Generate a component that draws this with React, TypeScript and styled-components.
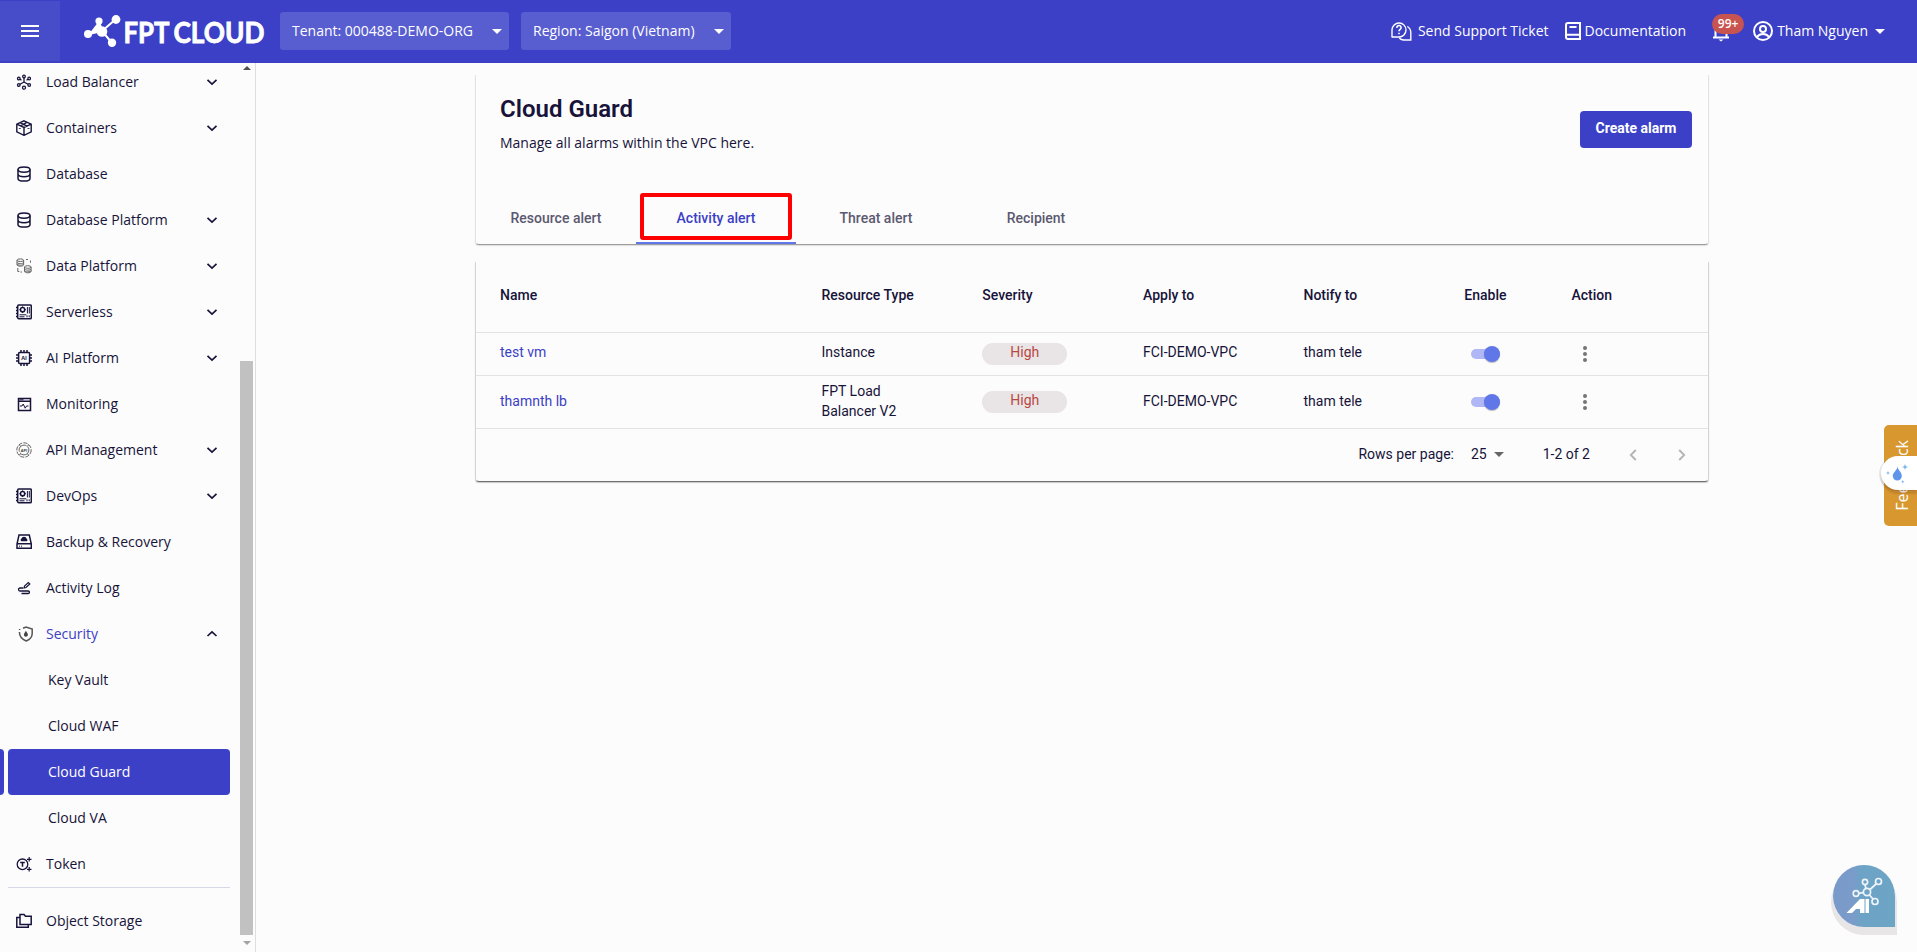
import { useState } from "react";
import type { ReactNode } from "react";
import styled, { createGlobalStyle } from "styled-components";

const GlobalStyle = createGlobalStyle`
    :root {
        --accent: #3b40c6;
        --accent-light: #5f77e9;
        --ink: #17133a;
        --muted: #5b5870;
        --bg: #fcfcfc;
        --line: #e3e3e3;
    }

    * {
        box-sizing: border-box;
    }

    body {
        margin: 0;
        background-color: var(--bg);
        color: var(--ink);
        font-family: "Open Sans", "Noto Sans", sans-serif;
        font-size: 14px;
        overflow: hidden;
    }

    button {
        font: inherit;
        color: inherit;
        border: none;
        background: none;
        padding: 0;
        cursor: pointer;
    }

    svg {
        display: block;
        flex-shrink: 0;
    }
`;

const Page = styled.div`
    height: 952px;
    display: flex;
    flex-direction: column;
`;

const Header = styled.header`
    height: 63px;
    flex-shrink: 0;
    display: flex;
    align-items: flex-start;
    background-color: var(--accent);
    color: white;
`;

const MenuButton = styled.button`
    width: 60px;
    height: 60px;
    margin-top: 1px;
    background-color: #474cc9;
    display: flex;
    align-items: center;
    justify-content: center;
`;

const Logo = styled.div`
    width: 184px;
    margin: 13px 12px 0 24px;

    svg {
        overflow: visible;
    }
`;

const Picker = styled.button<{ $width: number }>`
    width: ${(p) => p.$width}px;
    height: 38px;
    margin: 12px 12px 0 0;
    padding: 0 7px 0 12px;
    border-radius: 3px;
    background-color: #585dd0;
    color: white;
    font-weight: 500;
    display: flex;
    align-items: center;
    justify-content: space-between;
    white-space: nowrap;
`;

const PickerLabel = styled.span`
    padding-bottom: 2px;
`;

const HeaderLinks = styled.div`
    height: 62px;
    margin-left: auto;
    padding-right: 32px;
    display: flex;
    align-items: center;
    font-weight: 500;
    white-space: nowrap;
`;

const HeaderLink = styled.div<{ $gap: number; $after: number }>`
    display: flex;
    align-items: center;
    gap: ${(p) => p.$gap}px;
    margin-right: ${(p) => p.$after}px;

    span {
        padding-bottom: 2px;
    }
`;

const Bell = styled.div`
    position: relative;
    width: 18px;
    height: 22px;
    margin-right: 23px;
`;

const Badge = styled.span`
    position: absolute;
    left: 0;
    top: -6px;
    width: 32px;
    height: 20px;
    border-radius: 10px;
    background-color: #c75450;
    font-size: 12px;
    font-weight: 600;
    line-height: 19px;
    text-align: center;
`;

const Body = styled.div`
    flex: 1;
    min-height: 0;
    display: flex;
`;

const Sidebar = styled.aside`
    width: 256px;
    flex-shrink: 0;
    border-right: 1px solid #dedede;
    display: flex;
    overflow: hidden;
`;

const Nav = styled.nav`
    width: 240px;
    margin-top: -4px;
`;

const NavRow = styled.div`
    display: flex;
    gap: 4px;
    height: 46px;
`;

const Marker = styled.span<{ $active?: boolean }>`
    width: 4px;
    border-radius: 0 4px 4px 0;
    background-color: ${(p) => (p.$active ? "var(--accent)" : "transparent")};
`;

const NavItem = styled.a<{ $active?: boolean; $open?: boolean; $sub?: boolean }>`
    width: 222px;
    padding: 0 12px 0 ${(p) => (p.$sub ? 40 : 8)}px;
    border-radius: 4px;
    display: flex;
    align-items: center;
    background-color: ${(p) => (p.$active ? "var(--accent)" : "transparent")};
    color: ${(p) => (p.$active ? "white" : p.$open ? "var(--accent)" : "var(--ink)")};
    font-weight: ${(p) => (p.$active ? 500 : 400)};
`;

const NavIcon = styled.span`
    width: 30px;
    color: var(--ink);
`;

const NavLabel = styled.span`
    flex: 1;
    padding-bottom: 2px;
    white-space: nowrap;
`;

const NavDivider = styled.hr`
    width: 222px;
    height: 1px;
    margin: 0 0 10px 8px;
    border: none;
    background-color: #d7d9e6;
`;

const Scrollbar = styled.div`
    width: 13px;
    display: flex;
    flex-direction: column;
    align-items: center;
    padding: 3px 0 7px;
`;

const Thumb = styled.div`
    width: 13px;
    height: 574px;
    margin: auto 0 6px;
    background-color: #c1c1c1;
`;

const Main = styled.main`
    flex: 1;
    padding: 12px 208px 0 219px;
`;

const HeadCard = styled.section`
    height: 170px;
    border: 1px solid var(--line);
    border-top: none;
    border-bottom: 1px solid #9d9da0;
    border-radius: 0 0 4px 4px;
    box-shadow: 0 1px 1px rgba(0, 0, 0, 0.12);
    display: flex;
    flex-direction: column;
    justify-content: space-between;
`;

const TitleRow = styled.div`
    display: flex;
    justify-content: space-between;
    align-items: flex-start;
    padding: 19px 16px 0 24px;
`;

const Title = styled.h1`
    margin: 0;
    font: 600 24px/30px Roboto, sans-serif;
`;

const Subtitle = styled.p`
    margin: 9px 0 0;
    line-height: 20px;
`;

const CreateButton = styled.button`
    width: 112px;
    height: 37px;
    margin-top: 17px;
    padding-bottom: 3px;
    border-radius: 4px;
    background-color: var(--accent);
    color: white;
    font: 700 14px Roboto, sans-serif;
`;

const Tabs = styled.div`
    display: flex;
    height: 51px;
`;

const Tab = styled.button<{ $active: boolean }>`
    position: relative;
    width: 160px;
    border-bottom: 2px solid ${(p) => (p.$active ? "var(--accent-light)" : "transparent")};
    color: ${(p) => (p.$active ? "var(--accent)" : "var(--muted)")};
    font: 500 14px Roboto, sans-serif;
`;

const Highlight = styled.span`
    position: absolute;
    left: 4px;
    top: 0;
    width: 152px;
    height: 47px;
    border: 4px solid #ff0000;
    border-radius: 3px;
`;

const TableCard = styled.section`
    height: 220px;
    margin-top: 17px;
    border: 1px solid #d4d4d6;
    border-top: none;
    border-bottom: 1px solid #707072;
    border-radius: 0 0 4px 4px;
    box-shadow: 0 1px 1px rgba(0, 0, 0, 0.2);
    font-family: Roboto, sans-serif;
`;

const Row = styled.div<{ $height: number; $head?: boolean }>`
    height: ${(p) => p.$height}px;
    padding-left: 24px;
    border-bottom: 1px solid var(--line);
    display: grid;
    grid-template-columns: 321.5px 160.8px 160.7px 160.5px 160.8px 107.2px 1fr;
    align-items: center;
    line-height: 20px;
    font-weight: ${(p) => (p.$head ? 500 : 400)};
`;

const HeadCell = styled.div`
    padding-bottom: 4px;
`;

const Cell = styled.div<{ $lift: number; $narrow?: boolean }>`
    padding: 0 ${(p) => (p.$narrow ? 60 : 0)}px ${(p) => p.$lift}px 0;
`;

const NameLink = styled.a`
    color: var(--accent);
`;

const Severity = styled.span`
    width: 85px;
    height: 22px;
    border-radius: 11px;
    background-color: #e9e4e6;
    color: #b8483f;
    line-height: 19px;
    text-align: center;
`;

const Toggle = styled.button<{ $on: boolean }>`
    width: 29px;
    height: 10px;
    margin-left: 6.5px;
    border-radius: 5px;
    background-color: ${(p) => (p.$on ? "#afb7f4" : "#bbb")};
    display: flex;
    align-items: center;
    justify-content: ${(p) => (p.$on ? "flex-end" : "flex-start")};

    &::after {
        content: "";
        width: 16px;
        height: 16px;
        border-radius: 50%;
        background-color: ${(p) => (p.$on ? "var(--accent-light)" : "#fafafa")};
        box-shadow: 0 1px 1px rgba(0, 0, 0, 0.25);
    }
`;

const Dots = styled.button`
    width: 4px;
    margin-left: 12px;
    display: flex;
    flex-direction: column;
    gap: 2px;

    i {
        width: 4px;
        height: 4px;
        border-radius: 50%;
        background-color: #757575;
    }
`;

const Pager = styled.div`
    height: 52px;
    padding: 0 22px 1px 0;
    display: flex;
    align-items: center;
    justify-content: flex-end;
`;

const PagerText = styled.span<{ $after: number }>`
    margin-right: ${(p) => p.$after}px;
    padding-bottom: 1px;
`;

const PagerSelect = styled.div`
    margin-right: 39px;
    display: flex;
    align-items: center;
`;

const PagerArrows = styled.div`
    display: flex;
    gap: 41px;
`;

const Triangle = styled.i<{ $size: number; $color: string; $up?: boolean }>`
    border: ${(p) => p.$size}px solid transparent;
    border-top: ${(p) => (p.$up ? 0 : p.$size)}px solid ${(p) => p.$color};
    border-bottom: ${(p) => (p.$up ? p.$size : 0)}px solid ${(p) => p.$color};
`;

const FeedbackTab = styled.div`
    position: fixed;
    right: 0;
    top: 425px;
    width: 33px;
    height: 101px;
    padding-left: 2px;
    border-radius: 5px 0 0 5px;
    background-color: #d9982f;
    color: white;
    font-size: 16px;
    font-weight: 500;
    display: flex;
    align-items: center;
    justify-content: center;

    span {
        writing-mode: vertical-rl;
        transform: rotate(180deg);
    }
`;

const DropBubble = styled.div`
    position: fixed;
    right: 0;
    top: 456px;
    width: 36px;
    height: 34px;
    padding: 8px 0 0 1px;
    border-radius: 17px 0 0 17px;
    background-color: white;
    box-shadow: -2px 1px 0 rgba(60, 30, 40, 0.1), 0 4px 2px rgba(60, 30, 20, 0.15);
`;

const AiButton = styled.button`
    position: fixed;
    left: 1833px;
    top: 865px;
    width: 62px;
    height: 62px;
    border-radius: 31px 31px 0 31px;
    background: linear-gradient(90deg, #7a9aca 0, #7a9cca 33%, #6da3c6 45%, #6da5c5 100%);
    box-shadow: 0 6px 0 2px rgba(60, 30, 40, 0.1);
`;

const line = { fill: "none", stroke: "currentColor", strokeWidth: 1.5 };

const Icon = ({ children }: { children: ReactNode }) => (
    <svg width="16" height="16" viewBox="0 0 16 16" {...line}>{children}</svg>
);

const DatabaseIcon = (
    <Icon>
        <ellipse cx="8" cy="3.6" rx="6" ry="2.7" />
        <path d="M2 3.6v8.8c0 1.5 2.6 2.7 6 2.7s6-1.2 6-2.7V3.6M2 8c0 1.5 2.6 2.7 6 2.7S14 9.5 14 8" />
    </Icon>
);

const BoardIcon = (
    <Icon>
        <rect x="1.7" y="1" width="13.6" height="13.8" rx="1" />
        <circle cx="6.6" cy="5.7" r="2.1" />
        <path d="M6.6 2.4v1.2M6.6 7.8V9M3.3 5.7h1.2M8.7 5.7h1.2M11.4 3v6.5M13.3 3v6.5M3.5 10.8h6.8M3.5 12.8h5M11 11.3v2M13.2 11.3v2" strokeWidth="1" />
        <path d="M0 3.5h2M0 6.5h2M0 9.5h2M0 12.5h2" />
    </Icon>
);

const icons: Record<string, ReactNode> = {
    balancer: (
        <Icon>
            <g strokeWidth="1.3">
                <circle cx="8" cy="2.5" r="1.3" /><circle cx="8" cy="13.7" r="1.5" />
                <circle cx="2.8" cy="4.5" r="1.3" /><circle cx="13.2" cy="4.5" r="1.3" />
                <circle cx="2.8" cy="11" r="1.3" /><circle cx="13.2" cy="11" r="1.3" />
                <path d="M8 4v4M8 8l-4 2.3M8 8l4 2.3M4 5.3l1.5 1M12 5.3l-1.5 1" />
            </g>
        </Icon>
    ),
    container: (
        <Icon>
            <path d="M8 .8l7.2 3.3v7.8L8 15.3.8 11.9V4.1zM.8 4.1L8 7.5l7.2-3.4M8 7.5v7.8M4 2.6l7.2 3.5M4.3 5.8l6.5-3.5" strokeWidth="1.4" />
            <path d="M2.8 8.5h2M11.5 8.5h2" strokeWidth=".8" />
        </Icon>
    ),
    database: DatabaseIcon,
    data: (
        <Icon>
            <g stroke="#666" strokeWidth="1">
                <ellipse cx="4.3" cy="2.2" rx="3.3" ry="1.3" />
                <path d="M1 2.2v4.6c0 .8 1.5 1.4 3.3 1.4s3.3-.6 3.3-1.4V2.2M1 4.4c0 1.5 6.6 1.5 6.6 0M1 6c0 1.5 6.6 1.5 6.6 0" />
                <ellipse cx="11.8" cy="9" rx="3.3" ry="1.3" />
                <path d="M8.5 9v4.4c0 .8 1.5 1.4 3.3 1.4s3.3-.6 3.3-1.4V9M8.5 11c0 1.5 6.6 1.5 6.6 0M8.5 12.7c0 1.5 6.6 1.5 6.6 0" />
                <path d="M10 1.5h2M14.5 2.5v2.2M1.8 10v3.5h1.5M4.5 14H6" />
            </g>
        </Icon>
    ),
    board: BoardIcon,
    ai: (
        <Icon>
            <rect x="2.6" y="2.6" width="11" height="11" rx="1" />
            <path d="M5 0v2.5M8 0v2.5M11 0v2.5M5 13.5V16M8 13.5V16M11 13.5V16M0 5h2.5M0 8h2.5M0 11h2.5M13.5 5H16M13.5 8H16M13.5 11H16" />
            <text x="8.1" y="10.1" fontSize="5.5" fontWeight="700" textAnchor="middle" fill="currentColor" stroke="none">AI</text>
        </Icon>
    ),
    monitor: (
        <Icon>
            <path d="M2.5 2.5h12v12h-12zM2 5.2h12.5" />
            <path d="M3.5 3.8h4M4 10h2l1.2-2 2 4.2 1.3-2.2h2" strokeWidth="1" />
        </Icon>
    ),
    api: (
        <Icon>
            <g stroke="#666" strokeWidth="1">
                <circle cx="8" cy="8" r="7.2" strokeDasharray="4.3 1.2" />
                <circle cx="8" cy="8" r="4.9" strokeDasharray="12 1.3" />
                <path d="M3 2.7l2 1.8M13 2.7l-2 1.8M3 13.3l2-1.8M13 13.3l-2-1.8" />
            </g>
            <text x="8" y="9.5" fontSize="4" fontWeight="700" textAnchor="middle" fill="#444" stroke="none">API</text>
        </Icon>
    ),
    backup: (
        <Icon>
            <path d="M3 1h10.3l2 9v4.2H1V10zM1 9.8h14.3" />
            <path d="M5.3 7.2a1.5 1.5 0 010-2.5 2.8 2.8 0 015.4 0 1.4 1.4 0 010 2.5z" fill="currentColor" stroke="none" />
            <path d="M3 12.2h1M5 12.2h1" strokeWidth="1" />
        </Icon>
    ),
    activity: (
        <Icon>
            <path d="M7 8H4a1.3 1.3 0 000 3h8.2a1.2 1.2 0 010 2.5H5.5" strokeWidth="1.3" />
            <path d="M8 8l.5-2 3.8-3.5L13.8 4 10 7.5z" strokeWidth="1.2" />
        </Icon>
    ),
    security: (
        <svg width="18" height="16" viewBox="0 0 18 16" {...line}>
            <path d="M7 2.2L10 1l6.2 2v4.5c0 3.8-2.5 6-6 7.5-4-1.6-6.8-4.5-6.8-9M3.6 4V3" stroke="#555" />
            <path d="M9.9 4.8c1 1.7 2 2.7 2 4a2 2 0 01-4 0c0-1.3 1-2.3 2-4z" fill="#444" stroke="none" />
        </svg>
    ),
    token: (
        <Icon>
            <circle cx="6.5" cy="8.3" r="5.3" strokeWidth="1.3" />
            <path d="M4.2 6.5h4.6M6.5 6.5v4.2" />
            <path d="M13.2 1v4.6M11 3.3h4.5M13.2 11v4.6M11 13.3h4.5" strokeWidth="1.2" />
        </Icon>
    ),
    storage: (
        <Icon>
            <path d="M4 1.5h4l1.5 1.8h5.7v8.2H4zM3.500 4.500H.8v9.700h11.500v-2.500" />
        </Icon>
    ),
};

const navItems = [
    { label: "Load Balancer", icon: "balancer", arrow: true },
    { label: "Containers", icon: "container", arrow: true },
    { label: "Database", icon: "database" },
    { label: "Database Platform", icon: "database", arrow: true },
    { label: "Data Platform", icon: "data", arrow: true },
    { label: "Serverless", icon: "board", arrow: true },
    { label: "AI Platform", icon: "ai", arrow: true },
    { label: "Monitoring", icon: "monitor" },
    { label: "API Management", icon: "api", arrow: true },
    { label: "DevOps", icon: "board", arrow: true },
    { label: "Backup & Recovery", icon: "backup" },
    { label: "Activity Log", icon: "activity" },
    { label: "Security", icon: "security", arrow: true, open: true },
    { label: "Key Vault" },
    { label: "Cloud WAF" },
    { label: "Cloud Guard" },
    { label: "Cloud VA" },
    { label: "Token", icon: "token" },
    { label: "Object Storage", icon: "storage" },
];

const tabs = ["Resource alert", "Activity alert", "Threat alert", "Recipient"];

const columns = ["Name", "Resource Type", "Severity", "Apply to", "Notify to", "Enable", "Action"];

const alarms = [
    { name: "test vm", type: "Instance", severity: "High", vpc: "FCI-DEMO-VPC", notify: "tham tele", height: 43, lift: 4 },
    { name: "thamnth lb", type: "FPT Load Balancer V2", severity: "High", vpc: "FCI-DEMO-VPC", notify: "tham tele", height: 53, lift: 2 },
];

const Chevron = ({ up }: { up?: boolean }) => (
    <svg width="12" height="8" viewBox="0 0 12 8" {...line} strokeWidth={1.7} color="#17133a">
        <path d={up ? "M1.5 6L6 1.8 10.5 6" : "M1.5 1.8L6 6l4.5-4.2"} />
    </svg>
);

const PageArrow = ({ right }: { right?: boolean }) => (
    <svg width="8" height="12" viewBox="0 0 8 12" fill="none" stroke="#b3b3b3" strokeWidth="1.8">
        <path d={right ? "M1.2 1l5 5-5 5" : "M6.8 1l-5 5 5 5"} />
    </svg>
);

function TopBar() {
    return (
        <Header>
            <MenuButton aria-label="Menu">
                <svg width="18" height="12" fill="white">
                    <path d="M0 0h18v2H0zM0 5h18v2H0zM0 10h18v2H0z" />
                </svg>
            </MenuButton>
            <Logo>
                <svg width="194" height="44" fill="white" stroke="white">
                    <path d="M5 21L18 18L15 8M18 18L32 6M18 18L28 30" strokeWidth="2" />
                    <circle cx="4" cy="21" r="4" stroke="none" />
                    <circle cx="15" cy="8" r="3.6" stroke="none" />
                    <circle cx="18" cy="18.5" r="5.3" stroke="none" />
                    <circle cx="32" cy="6.5" r="4.4" stroke="none" />
                    <circle cx="28" cy="29.7" r="4.2" stroke="none" />
                    <g fontFamily="Lato, sans-serif" fontWeight="700" fontSize="28" strokeWidth=".8">
                        <text x="39.5" y="30" textLength="46" lengthAdjust="spacingAndGlyphs">FPT</text>
                        <text x="89.5" y="30" textLength="91" lengthAdjust="spacingAndGlyphs">CLOUD</text>
                    </g>
                </svg>
            </Logo>
            <Picker $width={229}>
                <PickerLabel>Tenant: 000488-DEMO-ORG</PickerLabel>
                <Triangle $size={5} $color="white" />
            </Picker>
            <Picker $width={210}>
                <PickerLabel>Region: Saigon (Vietnam)</PickerLabel>
                <Triangle $size={5} $color="white" />
            </Picker>
            <HeaderLinks>
                <HeaderLink $gap={6} $after={16}>
                    <svg width="21" height="19" viewBox="0 0 21 19" {...line} strokeWidth={1.4}>
                        <path d="M1 15.5V7.8a7 7 0 117 7.2H1zM16.3 4.5a7 7 0 013.5 6V18h-7a6 6 0 01-4.5-2" />
                        <path d="M5.9 5.9a2.1 2.1 0 114 .6c-.3.9-1.9 1.3-1.9 2.7M8 10.8v1.5" strokeWidth="1.6" />
                    </svg>
                    <span>Send Support Ticket</span>
                </HeaderLink>
                <HeaderLink $gap={4} $after={26}>
                    <svg width="16" height="18" viewBox="0 0 16 18" {...line} strokeWidth={2}>
                        <path d="M3 1h12v16H3a2 2 0 01-2-2V3a2 2 0 012-2zM1.5 12.7H15M4.5 5h7" />
                    </svg>
                    <span>Documentation</span>
                </HeaderLink>
                <Bell>
                    <svg width="18" height="22" viewBox="0 0 18 22" {...line} strokeWidth={2}>
                        <path d="M1 17.5h16M3.5 17V9.5a5.5 5.5 0 0111 0V17" />
                        <path d="M6.5 19.5h5L9 21.5z" fill="white" stroke="none" />
                    </svg>
                    <Badge>99+</Badge>
                </Bell>
                <HeaderLink $gap={4} $after={7}>
                    <svg width="20" height="20" viewBox="0 0 20 20" {...line} strokeWidth={2}>
                        <circle cx="10" cy="10" r="9" />
                        <circle cx="10" cy="8" r="3" />
                        <path d="M4 16c1.5-2.2 3.7-3 6-3s4.5.8 6 3" />
                    </svg>
                    <span>Tham Nguyen</span>
                </HeaderLink>
                <Triangle $size={5} $color="white" />
            </HeaderLinks>
        </Header>
    );
}

function SideMenu() {
    const active = "Cloud Guard";

    return (
        <Sidebar>
            <Nav>
                {navItems.map((item) => (
                    <div key={item.label}>
                        {item.label === "Object Storage" && <NavDivider />}
                        <NavRow>
                            <Marker $active={item.label === active} />
                            <NavItem $active={item.label === active} $open={item.open} $sub={!item.icon}>
                                {item.icon && <NavIcon>{icons[item.icon]}</NavIcon>}
                                <NavLabel>{item.label}</NavLabel>
                                {item.arrow && <Chevron up={item.open} />}
                            </NavItem>
                        </NavRow>
                    </div>
                ))}
            </Nav>
            <Scrollbar>
                <Triangle $size={4} $color="#505050" $up />
                <Thumb />
                <Triangle $size={4} $color="#a3a3a3" />
            </Scrollbar>
        </Sidebar>
    );
}

export default function App() {
    const [tab, setTab] = useState("Activity alert");
    const [enabled, setEnabled] = useState<Record<string, boolean>>({ "test vm": true, "thamnth lb": true });

    return (
        <Page>
            <GlobalStyle />
            <TopBar />
            <Body>
                <SideMenu />
                <Main>
                    <HeadCard>
                        <TitleRow>
                            <div>
                                <Title>Cloud Guard</Title>
                                <Subtitle>Manage all alarms within the VPC here.</Subtitle>
                            </div>
                            <CreateButton>Create alarm</CreateButton>
                        </TitleRow>
                        <Tabs>
                            {tabs.map((name) => (
                                <Tab key={name} $active={name === tab} onClick={() => setTab(name)}>
                                    {name}
                                    {name === tab && <Highlight />}
                                </Tab>
                            ))}
                        </Tabs>
                    </HeadCard>
                    <TableCard>
                        <Row $height={71} $head>
                            {columns.map((name) => <HeadCell key={name}>{name}</HeadCell>)}
                        </Row>
                        {alarms.map((alarm) => (
                            <Row key={alarm.name} $height={alarm.height}>
                                <Cell $lift={alarm.lift}><NameLink>{alarm.name}</NameLink></Cell>
                                <Cell $lift={alarm.lift} $narrow>{alarm.type}</Cell>
                                <Severity>{alarm.severity}</Severity>
                                <Cell $lift={alarm.lift}>{alarm.vpc}</Cell>
                                <Cell $lift={alarm.lift}>{alarm.notify}</Cell>
                                <Toggle $on={enabled[alarm.name]} aria-label="Enable"
                                    onClick={() => setEnabled({ ...enabled, [alarm.name]: !enabled[alarm.name] })} />
                                <Dots aria-label="Action"><i /><i /><i /></Dots>
                            </Row>
                        ))}
                        <Pager>
                            <PagerText $after={17}>Rows per page:</PagerText>
                            <PagerSelect>
                                <PagerText $after={7}>25</PagerText>
                                <Triangle $size={5} $color="#666" />
                            </PagerSelect>
                            <PagerText $after={39}>1-2 of 2</PagerText>
                            <PagerArrows>
                                <PageArrow />
                                <PageArrow right />
                            </PagerArrows>
                        </Pager>
                    </TableCard>
                </Main>
            </Body>
            <FeedbackTab><span>Feedback</span></FeedbackTab>
            <DropBubble>
                <svg width="26" height="20" viewBox="0 0 26 20" fill="#5e96ec">
                    <path d="M15.5 2c0 4 4.3 5.8 4.3 10a4.5 4.5 0 01-9 0c0-4 4.7-5.5 4.7-10z" />
                    <path d="M23 0l.8 2.2 2.2.8-2.2.8L23 6l-.8-2.2L20 3l2.2-.8zM6 7l.6 1.4L8 9l-1.4.6L6 11l-.6-1.4L4 9l1.4-.6zM20.8 16l.5 1.2 1.2.5-1.2.5-.5 1.2-.5-1.2-1.2-.5 1.2-.5z" fill="#70b2ee" />
                </svg>
            </DropBubble>
            <AiButton aria-label="AI assistant">
                <svg width="62" height="62" viewBox="0 0 62 62" fill="none" stroke="#eef4fa" strokeWidth="1.7">
                    <path d="M26 28.3l5-1M33 24l-1-4.5M37 24.5l6-5.5M36.5 30l4 4.5" />
                    <circle cx="23" cy="28.5" r="2.8" />
                    <circle cx="32" cy="17" r="2.6" />
                    <circle cx="34" cy="27" r="3.6" />
                    <circle cx="45.5" cy="16.5" r="3" />
                    <circle cx="42" cy="36.5" r="3" />
                    <path d="M13.5 48L27 34h4.5v14H27v-4h-4l-4 4zM32.5 34H36v14h-3.5z" fill="white" stroke="none" />
                </svg>
            </AiButton>
        </Page>
    );
}
